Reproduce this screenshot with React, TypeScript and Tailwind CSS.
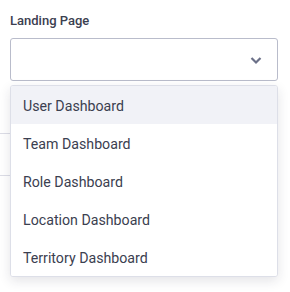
import React from 'react';

const options = [
  'User Dashboard',
  'Team Dashboard',
  'Role Dashboard',
  'Location Dashboard',
  'Territory Dashboard',
];

const App: React.FC = () => {
  return (
    <div className="relative h-[292px] w-[290px] overflow-hidden bg-white font-['Roboto',sans-serif]">
      <div className="px-[10px] pt-[12px]">
        <label className="block text-[13px] font-medium leading-[18px] text-[#3b4050]">Landing Page</label>
        <div className="mt-[8px] flex h-[43px] w-[268px] items-center justify-end rounded-[3px] border border-[#b9bccb] bg-white pr-[14px]">
          <svg className="h-[14px] w-[14px] text-[#6b7088]" viewBox="0 0 14 14" fill="none" stroke="currentColor" strokeWidth={2.2}>
            <path d="M2.5 5l4.5 4.5L11.5 5" />
          </svg>
        </div>
      </div>

      {/* field underneath the open menu */}
      <div className="mt-[52px] h-[43px] w-[200px] border-y border-[#dcdde6]" />

      <div className="absolute left-[10px] top-[85px] w-[268px] overflow-hidden rounded-[3px] border border-[#dddfe8] bg-white shadow-[0_4px_12px_rgba(30,35,60,0.12)]">
        {options.map((opt, i) => (
          <div
            key={opt}
            className={`flex h-[38px] items-center px-[12px] pt-[3px] text-[14.2px] text-[#3b4050] ${i === 0 ? 'bg-[#f1f2f7]' : 'bg-white'}`}
          >
            {opt}
          </div>
        ))}
      </div>
    </div>
  );
};

export default App;
